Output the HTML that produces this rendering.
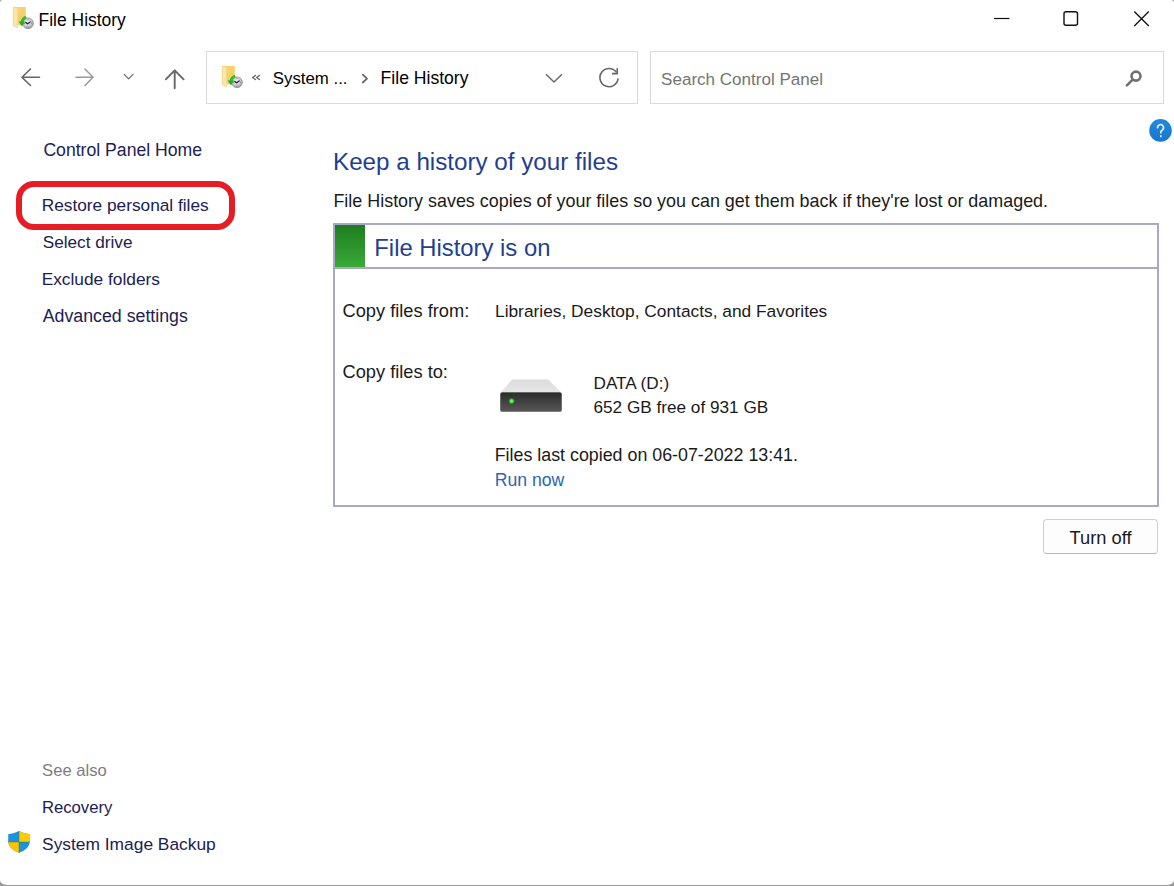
<!DOCTYPE html>
<html><head><meta charset="utf-8">
<style>
html,body{margin:0;padding:0;}
body{width:1174px;height:886px;position:relative;overflow:hidden;background:#9a9a9a;font-family:"Liberation Sans",sans-serif;color:#000;}
.t{position:absolute;white-space:nowrap;line-height:1;}
.nav{color:#1c2152;}
.hd{color:#1f3f90;}
.bx{position:absolute;box-sizing:border-box;}
svg{position:absolute;overflow:visible;}
</style></head><body>
<div class="bx" style="left:0;top:0;width:1174px;height:885px;background:#fff;border-radius:3px 3px 7px 7px / 3px 3px 5px 5px;"></div>

<!-- title bar -->
<svg id="ticon" style="left:12.9px;top:7.2px" width="22" height="24"><defs><linearGradient id="fb" x1="0" y1="0" x2="1" y2="1"><stop offset="0" stop-color="#f8d877"/><stop offset="1" stop-color="#f3cb62"/></linearGradient>
<radialGradient id="clk" cx="0.45" cy="0.4" r="0.6"><stop offset="0" stop-color="#eeeef2"/><stop offset="0.7" stop-color="#c2c2ca"/><stop offset="1" stop-color="#8d8d96"/></radialGradient></defs>
<g id="fhicon">
<rect x="0.2" y="0" width="12.6" height="18" fill="url(#fb)"/>
<path d="M0 0 L4.8 1.3 V20.8 L0 19 Z" fill="#fae6a8"/>
<path d="M0.2 0.2 L4.8 1.3 V20.8 L0.2 19 Z" fill="none" stroke="#ebcd78" stroke-width="0.5"/>
<circle cx="15" cy="16.3" r="5.4" fill="url(#clk)" stroke="#8c8c95" stroke-width="0.7"/>
<path d="M15 12.2 V13 M15 19.6 V20.4 M11 16.3 H11.8 M18.2 16.3 H19" stroke="#555" stroke-width="0.7"/>
<path d="M12.4 15.2 L14.6 16.8 L17.6 14.6" stroke="#1a1a1a" stroke-width="1.1" fill="none"/>
<path d="M13.2 10.2 A6.4 6.4 0 0 0 8.9 15.2" stroke="#2cc02c" stroke-width="2.8" fill="none"/>
<path d="M5.6 14.4 L12 14.6 L9 19.6 Z" fill="#24b024"/>
</g></svg>
<div class="t" id="title" style="left:38.6px;top:11.6px;font-size:17.44px;color:#000">File History</div>

<!-- window controls -->
<svg style="left:0;top:0" width="1174" height="40">
  <line x1="994" y1="18.5" x2="1009.5" y2="18.5" stroke="#111" stroke-width="1.2"/>
  <rect x="1064" y="11.7" width="13.5" height="13.5" rx="2" fill="none" stroke="#111" stroke-width="1.4"/>
  <path d="M1134.3 11.5 L1148.8 26 M1148.8 11.5 L1134.3 26" stroke="#111" stroke-width="1.3" fill="none"/>
</svg>

<!-- nav arrows -->
<svg style="left:0;top:0" width="220" height="110">
  <path d="M39.5 77.3 H22.5 M30.5 69 L22 77.3 L30.5 85.5" stroke="#666" stroke-width="1.6" fill="none" stroke-linecap="round" stroke-linejoin="round"/>
  <path d="M76 77.3 H92.5 M85 69 L93 77.3 L85 85.5" stroke="#9a9a9a" stroke-width="1.5" fill="none" stroke-linecap="round" stroke-linejoin="round"/>
  <path d="M124.2 74.3 L128.6 78.8 L133 74.3" stroke="#666" stroke-width="1.2" fill="none" stroke-linecap="round" stroke-linejoin="round"/>
  <path d="M174.7 88.3 V70.5 M165.8 79.3 L174.7 70.3 L183.6 79.3" stroke="#666" stroke-width="1.9" fill="none" stroke-linecap="round" stroke-linejoin="round"/>
</svg>

<!-- address bar -->
<div class="bx" style="left:206px;top:51px;width:432px;height:53px;border:1px solid #d9d9d9;"></div>
<svg id="aicon" style="left:222px;top:66px" width="22" height="24"><use href="#fhicon"/></svg>
<div class="t" id="sys" style="left:272.8px;top:70.8px;font-size:16.82px;">System ...</div>
<svg style="left:0;top:0" width="660" height="110">
  <path d="M362.8 74.7 L367 78.6 L362.8 82.5" stroke="#666" stroke-width="1.8" stroke-linecap="round" stroke-linejoin="round" fill="none"/>
  <path d="M546 74.2 L554 82 L562 74.2" stroke="#666" stroke-width="1.4" fill="none"/>
  <path d="M618.1 78.4 A9.1 9.1 0 1 1 616.5 72.4" stroke="#666" stroke-width="1.6" fill="none"/>
  <path d="M617.2 68.2 V73.6 H612" stroke="#666" stroke-width="1.6" fill="none"/>
  <path d="M255.4 75.5 L252.7 77.5 L255.4 79.5 M259.4 75.5 L256.7 77.5 L259.4 79.5" stroke="#6a6a6a" stroke-width="1.5" stroke-linecap="round" stroke-linejoin="round" fill="none"/>
</svg>
<div class="t" id="addrfh" style="left:380.6px;top:69.8px;font-size:17.58px;">File History</div>

<!-- search -->
<div class="bx" style="left:650px;top:51px;width:514px;height:53px;border:1px solid #d9d9d9;"></div>
<div class="t" id="search" style="left:661.1px;top:70.7px;font-size:17.05px;color:#747474">Search Control Panel</div>
<svg style="left:0;top:0" width="1174" height="150">
  <circle cx="1136" cy="76.1" r="4.5" stroke="#707070" stroke-width="2.6" fill="none"/>
  <path d="M1132.6 79.6 L1126.9 85.3" stroke="#707070" stroke-width="2.6" stroke-linecap="round"/>
</svg>

<!-- help -->
<svg style="left:0;top:0" width="1174" height="150">
  <defs><linearGradient id="hg" x1="0" y1="0" x2="0" y2="1"><stop offset="0" stop-color="#1f8ae0"/><stop offset="1" stop-color="#1777cc"/></linearGradient></defs>
  <circle cx="1160.5" cy="130.4" r="11.3" fill="url(#hg)"/>
  <path d="M1157.6 128.3 A3 3 0 1 1 1162.4 130 Q1160.9 130.8 1160.8 132.2 V133.6" stroke="#fff" stroke-width="1.5" fill="none"/>
  <rect x="1160.1" y="135.2" width="1.4" height="1.9" fill="#fff"/>
</svg>


<!-- left nav -->
<div class="t nav" id="cph" style="left:43.4px;top:141.9px;font-size:17.64px;">Control Panel Home</div>
<div class="bx" style="left:16px;top:181px;width:219px;height:49px;border:6px solid #e71d25;border-radius:18px;"></div>
<div class="t nav" id="rpf" style="left:41.7px;top:196.9px;font-size:17.27px;">Restore personal files</div>
<div class="t nav" id="sd" style="left:42.7px;top:234.1px;font-size:17.19px;">Select drive</div>
<div class="t nav" id="ef" style="left:41.7px;top:270.8px;font-size:17.31px;">Exclude folders</div>
<div class="t nav" id="as" style="left:42.7px;top:307.5px;font-size:17.78px;">Advanced settings</div>

<div class="t" id="seealso" style="left:42.1px;top:762.7px;font-size:16.60px;color:#7d7d7d">See also</div>
<div class="t nav" id="recov" style="left:41.9px;top:799.7px;font-size:16.70px;">Recovery</div>
<div class="t nav" id="sib" style="left:42.1px;top:835.8px;font-size:17.37px;">System Image Backup</div>
<svg style="left:0;top:0" width="40" height="886">
  <path d="M19 831 Q13 834 8.2 834.2 V842 Q8.5 849 19 852.8 Q29.5 849 29.8 842 V834.2 Q25 834 19 831 Z" fill="#1f92de"/>
  <path d="M19 831 Q25 834 29.8 834.2 V842 H19 Z" fill="#ffcc00"/>
  <path d="M8.2 842 H19 V852.8 Q8.5 849 8.2 842 Z" fill="#ffc400"/>
  <path d="M19 831.5 V852.5 M8.4 842 H29.6" stroke="#3f7a3a" stroke-width="0.7" opacity="0.7"/>
</svg>

<!-- main -->
<div class="t hd" id="keep" style="left:333.0px;top:149.8px;font-size:24.20px;">Keep a history of your files</div>
<div class="t" id="desc" style="left:333.4px;top:192.9px;font-size:17.93px;color:#1a1a1a">File History saves copies of your files so you can get them back if they're lost or damaged.</div>

<div class="bx" style="left:333px;top:223px;width:826px;height:284px;border:2px solid #a8a9c9;"></div>
<div class="bx" style="left:335px;top:267px;width:822px;height:2px;background:#a8a9c9;"></div>
<div class="bx" style="left:335px;top:225px;width:30px;height:42px;background:linear-gradient(#1f7c1f,#3aab39);"></div>
<div class="t hd" id="fhon" style="left:374.3px;top:235.9px;font-size:23.83px;">File History is on</div>

<div class="t" id="cff" style="left:342.5px;top:301.8px;font-size:18.25px;color:#1a1a1a">Copy files from:</div>
<div class="t" id="lib" style="left:495.0px;top:302.8px;font-size:17.33px;color:#1a1a1a">Libraries, Desktop, Contacts, and Favorites</div>
<div class="t" id="cft" style="left:342.5px;top:362.6px;font-size:18.24px;color:#1a1a1a">Copy files to:</div>
<div class="t" id="data" style="left:593.5px;top:374.5px;font-size:17.16px;color:#1a1a1a">DATA (D:)</div>
<div class="t" id="free" style="left:593.5px;top:399.2px;font-size:17.18px;color:#1a1a1a">652 GB free of 931 GB</div>
<div class="t" id="last" style="left:494.7px;top:446.9px;font-size:17.83px;color:#1a1a1a">Files last copied on 06-07-2022 13:41.</div>
<div class="t" id="run" style="left:494.7px;top:472.0px;font-size:17.65px;color:#2c66b1">Run now</div>

<svg style="left:0;top:0" width="600" height="430">
  <defs>
    <linearGradient id="dtop" x1="0" y1="0" x2="0" y2="1"><stop offset="0" stop-color="#dcdcdc"/><stop offset="1" stop-color="#e6e6e6"/></linearGradient>
    <linearGradient id="dfr" x1="0" y1="0" x2="0" y2="1"><stop offset="0" stop-color="#2c2c2c"/><stop offset="1" stop-color="#575757"/></linearGradient>
    <radialGradient id="led"><stop offset="0" stop-color="#a8ff9c"/><stop offset="0.45" stop-color="#3ddf36"/><stop offset="1" stop-color="#2a7a2a" stop-opacity="0"/></radialGradient>
  </defs>
  <path d="M512.3 379.4 H548 L561.5 392.5 H500.5 Z" fill="url(#dtop)"/>
  <rect x="500" y="392.3" width="62" height="19.7" rx="2" fill="#8c8c8c"/>
  <rect x="500.6" y="392.6" width="60.8" height="18.6" rx="1.5" fill="url(#dfr)"/>
  <circle cx="511.6" cy="401.1" r="3.6" fill="url(#led)"/>
</svg>

<div class="bx" style="left:1043px;top:519px;width:115px;height:35px;border:1px solid #d0d0d0;border-bottom-color:#b8b8b8;border-radius:4px;background:#fdfdfd;"></div>
<div class="t" id="turnoff" style="left:1069.5px;top:528.7px;font-size:18.30px;color:#1a1a1a">Turn off</div>

<!-- bottom edge -->

</body></html>
